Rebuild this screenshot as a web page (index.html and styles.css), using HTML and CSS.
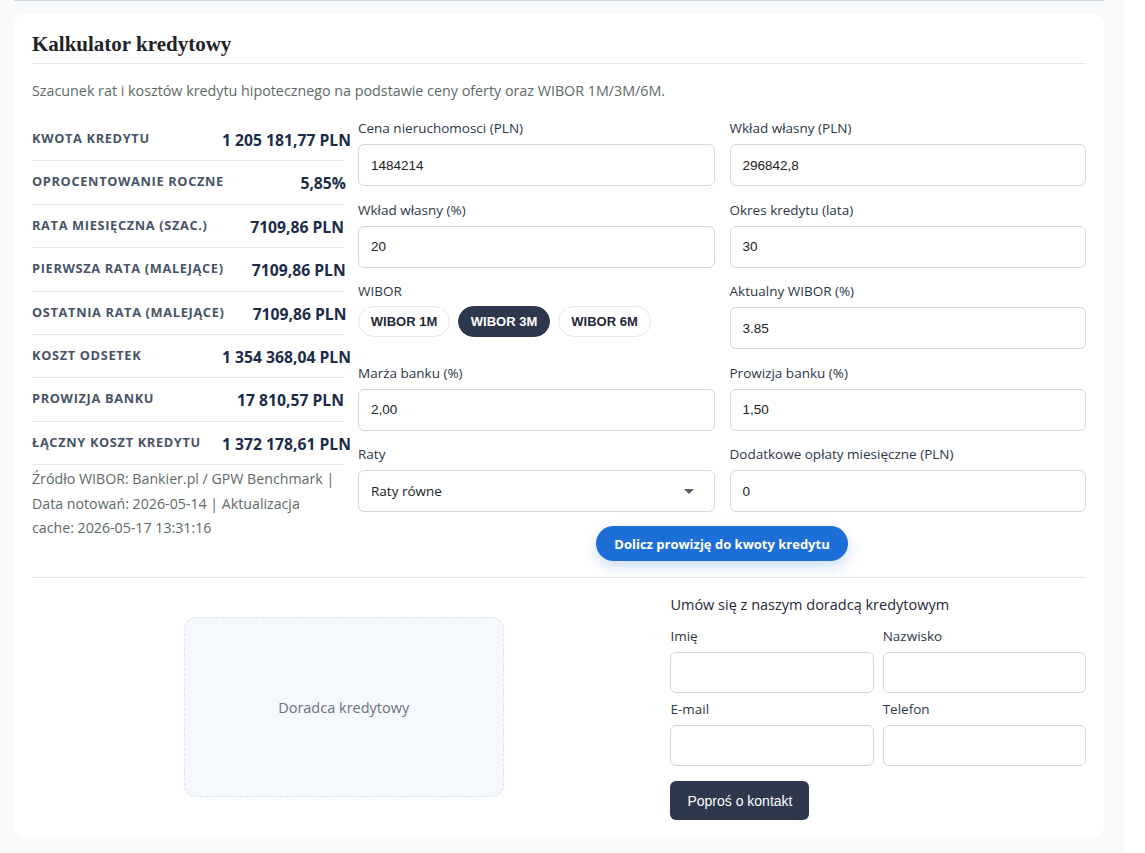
FILE: index.html
```html
<!DOCTYPE html>
<html lang="pl">
<head>
<meta charset="utf-8">
<title>Kalkulator kredytowy</title>
<link rel="stylesheet" href="styles.css">
</head>
<body>
<div class="page">
  <div class="topline"></div>
  <section class="card">
    <h2 class="title">Kalkulator kredytowy</h2>
    <p class="desc">Szacunek rat i kosztów kredytu hipotecznego na podstawie ceny oferty oraz WIBOR 1M/3M/6M.</p>

    <div class="main">
      <div class="stats">
        <div class="stat"><span class="stat-label">Kwota kredytu</span><span class="stat-value">1 205 181,77 PLN</span></div>
        <div class="stat"><span class="stat-label">Oprocentowanie roczne</span><span class="stat-value">5,85%</span></div>
        <div class="stat"><span class="stat-label">Rata miesięczna (szac.)</span><span class="stat-value">7109,86 PLN</span></div>
        <div class="stat"><span class="stat-label">Pierwsza rata (malejące)</span><span class="stat-value">7109,86 PLN</span></div>
        <div class="stat"><span class="stat-label">Ostatnia rata (malejące)</span><span class="stat-value">7109,86 PLN</span></div>
        <div class="stat"><span class="stat-label">Koszt odsetek</span><span class="stat-value">1 354 368,04 PLN</span></div>
        <div class="stat"><span class="stat-label">Prowizja banku</span><span class="stat-value">17 810,57 PLN</span></div>
        <div class="stat"><span class="stat-label">Łączny koszt kredytu</span><span class="stat-value">1 372 178,61 PLN</span></div>
        <p class="source">Źródło WIBOR: Bankier.pl / GPW Benchmark | Data notowań: 2026-05-14 | Aktualizacja cache: 2026-05-17 13:31:16</p>
      </div>

      <div class="form">
        <div class="grid2">
          <div class="field">
            <label class="label">Cena nieruchomosci (PLN)</label>
            <div class="input">1484214</div>
          </div>
          <div class="field">
            <label class="label">Wkład własny (PLN)</label>
            <div class="input">296842,8</div>
          </div>
          <div class="field">
            <label class="label">Wkład własny (%)</label>
            <div class="input">20</div>
          </div>
          <div class="field">
            <label class="label">Okres kredytu (lata)</label>
            <div class="input">30</div>
          </div>
          <div class="field">
            <label class="label label-wibor">WIBOR</label>
            <div class="pills">
              <span class="pill">WIBOR 1M</span>
              <span class="pill pill-active">WIBOR 3M</span>
              <span class="pill">WIBOR 6M</span>
            </div>
          </div>
          <div class="field">
            <label class="label">Aktualny WIBOR (%)</label>
            <div class="input">3.85</div>
          </div>
          <div class="field">
            <label class="label">Marża banku (%)</label>
            <div class="input">2,00</div>
          </div>
          <div class="field">
            <label class="label">Prowizja banku (%)</label>
            <div class="input">1,50</div>
          </div>
          <div class="field">
            <label class="label">Raty</label>
            <div class="input select"><span>Raty równe</span><span class="caret"></span></div>
          </div>
          <div class="field">
            <label class="label">Dodatkowe opłaty miesięczne (PLN)</label>
            <div class="input">0</div>
          </div>
        </div>
        <div class="actions">
          <button class="btn-blue">Dolicz prowizję do kwoty kredytu</button>
        </div>
      </div>
    </div>

    <hr class="divider">

    <div class="bottom">
      <div class="photo-col">
        <div class="photo">Doradca kredytowy</div>
      </div>
      <div class="contact">
        <p class="contact-title">Umów się z naszym doradcą kredytowym</p>
        <div class="cgrid">
          <div class="cfield"><label class="label">Imię</label><div class="input"></div></div>
          <div class="cfield"><label class="label">Nazwisko</label><div class="input"></div></div>
          <div class="cfield"><label class="label">E-mail</label><div class="input"></div></div>
          <div class="cfield"><label class="label">Telefon</label><div class="input"></div></div>
        </div>
        <button class="btn-dark">Poproś o kontakt</button>
      </div>
    </div>
  </section>
</div>
</body>
</html>
```

FILE: styles.css
```css
* { box-sizing: border-box; }
html, body { margin: 0; padding: 0; background: #ffffff; }
body { font-family: "Open Sans", "Noto Sans", sans-serif; color: #1f2937; }

.page {
  width: 1124px;
  min-height: 853px;
  background: #f8f9fb;
  padding: 0 20px 16px 14px;
}
.topline {
  height: 1px;
  background: #cfd6e4;
  margin-bottom: 13px;
}
.card {
  background: #ffffff;
  border-radius: 10px;
  padding: 16px 18px 17px 18px;
}
.title {
  margin: 0;
  font-family: "Liberation Serif", "Times New Roman", serif;
  font-weight: 700;
  font-size: 21px;
  line-height: 26px;
  color: #1f2328;
  padding: 1px 0 6px;
  border-bottom: 1px solid #e5e7eb;
}
.desc {
  margin: 14px 0 0;
  font-size: 14.3px;
  line-height: 26px;
  color: #5d6a67;
}

.main {
  display: grid;
  grid-template-columns: 312px 1fr;
  column-gap: 14px;
  margin-top: 14px;
}
.stats { min-width: 0; }
.stat {
  display: grid;
  grid-template-columns: 1fr 122px;
  align-items: start;
  border-bottom: 1px solid #e6e9ef;
  padding: 10px 0 8px;
  height: 43.4px;
}
.stat-label {
  font-size: 12.8px;
  font-weight: 700;
  letter-spacing: 0.65px;
  text-transform: uppercase;
  color: #475467;
  line-height: 21px;
  white-space: nowrap;
}
.stat-value {
  font-size: 15.7px;
  font-weight: 700;
  color: #1c2b4a;
  line-height: 25px;
  text-align: right;
  white-space: nowrap;
}
.source {
  margin: 0;
  padding: 2px 6px 0 0;
  font-size: 14.2px;
  line-height: 24.5px;
  color: #5d6a67;
}

.form { min-width: 0; }
.grid2 {
  display: grid;
  grid-template-columns: 1fr 1fr;
  column-gap: 15px;
  row-gap: 13.5px;
}
.field { display: flex; flex-direction: column; }
.label {
  font-size: 13.5px;
  line-height: 20px;
  color: #2d3748;
  margin-bottom: 6px;
}
.label-wibor { margin-bottom: 5px; }
.input {
  height: 42px;
  border: 1px solid #d4d7dd;
  border-radius: 6px;
  background: #fff;
  padding: 0 12px;
  display: flex;
  align-items: center;
  font-family: "Liberation Sans", Arial, sans-serif;
  font-size: 13.5px;
  color: #222;
}
.select {
  font-family: "Open Sans", "Noto Sans", sans-serif;
  justify-content: space-between;
  padding-right: 20px;
}
.caret {
  width: 0; height: 0;
  border-left: 5px solid transparent;
  border-right: 5px solid transparent;
  border-top: 5px solid #5a6270;
}
.pills { display: flex; gap: 8px; }
.pill {
  height: 31px;
  width: 92px;
  border: 1px solid #e4e7ec;
  border-radius: 16px;
  display: flex;
  align-items: center;
  justify-content: center;
  font-family: "Liberation Sans", Arial, sans-serif;
  font-size: 13px;
  font-weight: 700;
  color: #1f2937;
  background: #fff;
}
.pill + .pill + .pill { width: 93px; }
.pill-active {
  background: #2e384d;
  border-color: #2e384d;
  color: #fff;
}
.actions {
  display: flex;
  justify-content: center;
  margin-top: 14px;
}
.btn-blue {
  height: 35px;
  padding: 0 18px;
  border: none;
  border-radius: 18px;
  background: #1e6ed8;
  color: #fff;
  font-family: "Open Sans", "Noto Sans", sans-serif;
  font-size: 13px;
  font-weight: 700;
  box-shadow: 0 6px 14px rgba(30, 110, 216, 0.22);
}

.divider {
  border: none;
  border-top: 1px solid #e3e5e8;
  margin: 16px 0 0;
}

.bottom {
  display: grid;
  grid-template-columns: 3fr 2fr;
  column-gap: 15px;
  align-items: center;
  padding-top: 16px;
}
.photo-col { display: flex; justify-content: center; }
.photo {
  width: 320px;
  height: 180px;
  border: 1px dashed #dfe4ec;
  border-radius: 12px;
  background: #f5f8fd;
  display: flex;
  align-items: center;
  justify-content: center;
  font-size: 14.5px;
  color: #6b7280;
}
.contact-title {
  margin: 0 0 10px;
  font-size: 14.5px;
  line-height: 22px;
  color: #1f2937;
}
.cgrid {
  display: grid;
  grid-template-columns: 1fr 1fr;
  column-gap: 9px;
  row-gap: 6px;
}
.cfield { display: flex; flex-direction: column; }
.cfield .label { margin-bottom: 6px; }
.cfield .input { height: 41px; }
.btn-dark {
  margin-top: 15px;
  height: 39px;
  padding: 0 17px;
  border: none;
  border-radius: 6px;
  background: #2e384d;
  color: #fff;
  font-family: "Liberation Sans", Arial, sans-serif;
  font-size: 14px;
}
```
